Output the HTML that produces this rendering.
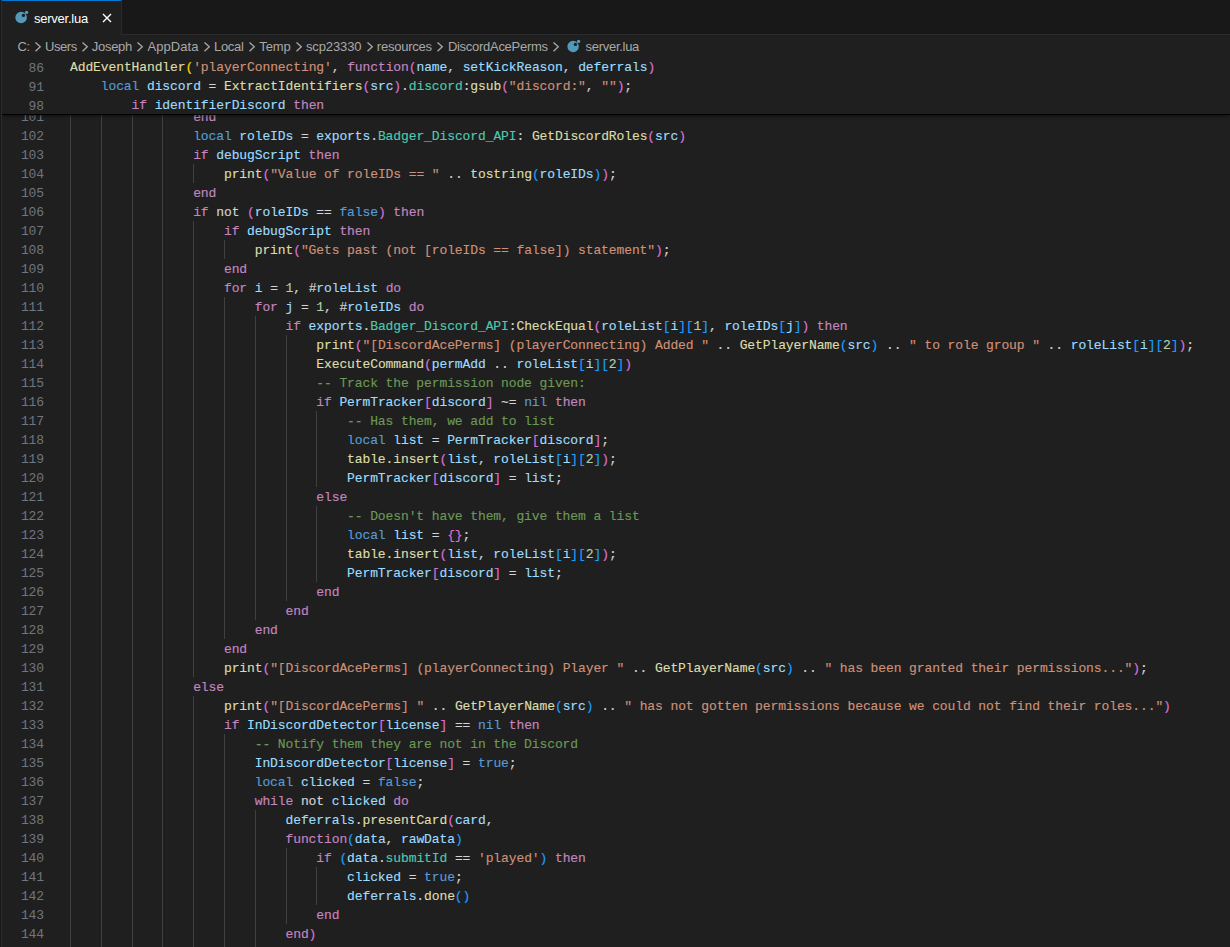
<!DOCTYPE html>
<html lang="en">
<head>
<meta charset="utf-8">
<title>server.lua</title>
<style>
html,body{margin:0;padding:0;background:#1f1f1f;}
body{width:1230px;height:947px;overflow:hidden;position:relative;font-family:"Liberation Sans",sans-serif;}
#edge{position:absolute;left:0;top:0;width:1px;height:947px;background:#181818;border-right:1px solid #2b2b2b;z-index:9}
#tabs{position:absolute;left:2px;top:0;width:1228px;height:34px;background:#181818;border-bottom:1px solid #2b2b2b}
#tab{position:absolute;left:0;top:0;width:119px;height:34px;background:#1f1f1f;border-top:1px solid #0078d4;border-right:1px solid #2b2b2b;box-sizing:content-box}
#tab .lbl{position:absolute;left:32px;top:9px;font-size:13px;line-height:17px;color:#fff;white-space:pre;letter-spacing:-0.24px}
#tab svg{position:absolute}
#bc{position:absolute;left:2px;top:35px;width:1228px;height:22px;background:#1f1f1f;color:#a9a9a9;font-size:13px;line-height:22px}
#bc span{position:absolute;top:1px;white-space:pre}
#bc svg{position:absolute;top:0.5px}
#ed{position:absolute;left:2px;top:57px;width:1228px;height:890px;overflow:hidden;background:#1f1f1f}
#sticky{position:absolute;left:0;top:0;width:1228px;height:57px;background:#1f1f1f;z-index:5;box-shadow:0 1px 0 #000,0 3px 3px -1px rgba(0,0,0,.55)}
.l{position:absolute;left:-2px;width:1230px;height:19px;font-family:"Liberation Mono",monospace;font-size:13px;line-height:19px;letter-spacing:-0.104px;white-space:pre;color:#d4d4d4}
.l .ln{position:absolute;left:0;top:2px;width:44px;text-align:right;color:#6e7681}
.l .code{position:absolute;top:2px;-webkit-text-stroke:0.15px}
#sticky .code{top:1px}#sticky .ln{top:1.5px}
.l i{position:absolute;top:1px;width:1px;height:19px;background:#404040}
.k{color:#c586c0}.b{color:#569cd6}.w{color:#d4d4d4}.s{color:#ce9178}.c{color:#6a9955}.n{color:#b5cea8}
.f{color:#dcdcaa}.t{color:#4ec9b0}.v{color:#9cdcfe}
.B0{color:#ffd700}.B1{color:#da70d6}.B2{color:#179fff}
</style>
</head>
<body>
<div id="edge"></div>
<div id="tabs">
  <div id="tab">
    <svg style="left:12px;top:9px" width="16" height="16" viewBox="0 0 16 16"><path fill="#519aba" fill-rule="evenodd" d="M7.1 1.7a5.8 5.8 0 1 0 0 11.6a5.8 5.8 0 1 0 0-11.6zM9.4 3.7a1.7 1.7 0 1 1 0 3.4a1.7 1.7 0 1 1 0-3.4z"/><circle cx="12.6" cy="2.4" r="1.7" fill="#519aba"/></svg>
    <span class="lbl">server.lua</span>
    <svg style="left:96.9px;top:9px" width="16" height="16" viewBox="0 0 16 16"><path d="M4 4l8 8M12 4l-8 8" stroke="#ffffff" stroke-width="1.35" fill="none"/></svg>
  </div>
</div>
<div id="bc">
<span style="left:15.5px;letter-spacing:-0.50px">C:</span><svg style="left:27.8px" width="16" height="22" viewBox="0 0 16 22"><path d="M5.5 6.4l4.8 4.4l-4.8 4.4" stroke="#a9a9a9" stroke-width="1.3" fill="none"/></svg>
<span style="left:43.1px;letter-spacing:-0.47px">Users</span><svg style="left:75.0px" width="16" height="22" viewBox="0 0 16 22"><path d="M5.5 6.4l4.8 4.4l-4.8 4.4" stroke="#a9a9a9" stroke-width="1.3" fill="none"/></svg>
<span style="left:89.8px;letter-spacing:-0.29px">Joseph</span><svg style="left:130.3px" width="16" height="22" viewBox="0 0 16 22"><path d="M5.5 6.4l4.8 4.4l-4.8 4.4" stroke="#a9a9a9" stroke-width="1.3" fill="none"/></svg>
<span style="left:145.5px;letter-spacing:0.06px">AppData</span><svg style="left:196.8px" width="16" height="22" viewBox="0 0 16 22"><path d="M5.5 6.4l4.8 4.4l-4.8 4.4" stroke="#a9a9a9" stroke-width="1.3" fill="none"/></svg>
<span style="left:212.1px;letter-spacing:-0.34px">Local</span><svg style="left:241.8px" width="16" height="22" viewBox="0 0 16 22"><path d="M5.5 6.4l4.8 4.4l-4.8 4.4" stroke="#a9a9a9" stroke-width="1.3" fill="none"/></svg>
<span style="left:257.2px;letter-spacing:-0.05px">Temp</span><svg style="left:289.1px" width="16" height="22" viewBox="0 0 16 22"><path d="M5.5 6.4l4.8 4.4l-4.8 4.4" stroke="#a9a9a9" stroke-width="1.3" fill="none"/></svg>
<span style="left:303.9px;letter-spacing:-0.11px">scp23330</span><svg style="left:359.7px" width="16" height="22" viewBox="0 0 16 22"><path d="M5.5 6.4l4.8 4.4l-4.8 4.4" stroke="#a9a9a9" stroke-width="1.3" fill="none"/></svg>
<span style="left:374.8px;letter-spacing:-0.22px">resources</span><svg style="left:430.2px" width="16" height="22" viewBox="0 0 16 22"><path d="M5.5 6.4l4.8 4.4l-4.8 4.4" stroke="#a9a9a9" stroke-width="1.3" fill="none"/></svg>
<span style="left:445.9px;letter-spacing:-0.28px">DiscordAcePerms</span><svg style="left:546.1px" width="16" height="22" viewBox="0 0 16 22"><path d="M5.5 6.4l4.8 4.4l-4.8 4.4" stroke="#a9a9a9" stroke-width="1.3" fill="none"/></svg>
<span style="left:583.5px;letter-spacing:-0.28px">server.lua</span>
<svg style="left:563.6px;top:4.1px" width="16" height="16" viewBox="0 0 16 16"><path fill="#519aba" fill-rule="evenodd" d="M7.1 1.8a5.7 5.7 0 1 0 0 11.4a5.7 5.7 0 1 0 0-11.4zM9.4 3.7a1.7 1.7 0 1 1 0 3.4a1.7 1.7 0 1 1 0-3.4z"/><circle cx="12.6" cy="2.4" r="1.7" fill="#519aba"/></svg>

</div>
<div id="ed">
<div id="sticky">
<div class="l" style="top:0px"><span class="ln">86</span><span class="code" style="left:70px"><span class="f">AddEventHandler</span><span class="B0">(</span><span class="s">'playerConnecting'</span><span class="w">, </span><span class="k">function</span><span class="B1">(</span><span class="v">name</span><span class="w">, </span><span class="v">setKickReason</span><span class="w">, </span><span class="v">deferrals</span><span class="B1">)</span></span></div>
<div class="l" style="top:19px"><span class="ln">91</span><span class="code" style="left:100.79px"><span class="b">local </span><span class="v">discord </span><span class="w">= </span><span class="f">ExtractIdentifiers</span><span class="B1">(</span><span class="v">src</span><span class="B1">)</span><span class="w">.</span><span class="t">discord</span><span class="w">:</span><span class="f">gsub</span><span class="B1">(</span><span class="s">"discord:"</span><span class="w">, </span><span class="s">""</span><span class="B1">)</span><span class="w">;</span></span></div>
<div class="l" style="top:38px"><span class="ln">98</span><span class="code" style="left:131.58px"><span class="k">if </span><span class="v">identifierDiscord </span><span class="k">then</span></span></div>

</div>
<div class="l" style="top:49px"><span class="ln">101</span><i style="left:70px"></i><i style="left:101px"></i><i style="left:132px"></i><i style="left:162px"></i><span class="code" style="left:193.15px"><span class="k">end</span></span></div>
<div class="l" style="top:68px"><span class="ln">102</span><i style="left:70px"></i><i style="left:101px"></i><i style="left:132px"></i><i style="left:162px"></i><span class="code" style="left:193.15px"><span class="b">local </span><span class="v">roleIDs </span><span class="w">= </span><span class="v">exports</span><span class="w">.</span><span class="t">Badger_Discord_API</span><span class="w">: </span><span class="f">GetDiscordRoles</span><span class="B1">(</span><span class="v">src</span><span class="B1">)</span></span></div>
<div class="l" style="top:87px"><span class="ln">103</span><i style="left:70px"></i><i style="left:101px"></i><i style="left:132px"></i><i style="left:162px"></i><span class="code" style="left:193.15px"><span class="k">if </span><span class="v">debugScript </span><span class="k">then</span></span></div>
<div class="l" style="top:106px"><span class="ln">104</span><i style="left:70px"></i><i style="left:101px"></i><i style="left:132px"></i><i style="left:162px"></i><i style="left:193px"></i><span class="code" style="left:223.94px"><span class="f">print</span><span class="B1">(</span><span class="s">"Value of roleIDs == " </span><span class="w">.. </span><span class="f">tostring</span><span class="B2">(</span><span class="v">roleIDs</span><span class="B2">)</span><span class="B1">)</span><span class="w">;</span></span></div>
<div class="l" style="top:125px"><span class="ln">105</span><i style="left:70px"></i><i style="left:101px"></i><i style="left:132px"></i><i style="left:162px"></i><span class="code" style="left:193.15px"><span class="k">end</span></span></div>
<div class="l" style="top:144px"><span class="ln">106</span><i style="left:70px"></i><i style="left:101px"></i><i style="left:132px"></i><i style="left:162px"></i><span class="code" style="left:193.15px"><span class="k">if </span><span class="w">not </span><span class="B1">(</span><span class="v">roleIDs </span><span class="w">== </span><span class="b">false</span><span class="B1">) </span><span class="k">then</span></span></div>
<div class="l" style="top:163px"><span class="ln">107</span><i style="left:70px"></i><i style="left:101px"></i><i style="left:132px"></i><i style="left:162px"></i><i style="left:193px"></i><span class="code" style="left:223.94px"><span class="k">if </span><span class="v">debugScript </span><span class="k">then</span></span></div>
<div class="l" style="top:182px"><span class="ln">108</span><i style="left:70px"></i><i style="left:101px"></i><i style="left:132px"></i><i style="left:162px"></i><i style="left:193px"></i><i style="left:224px"></i><span class="code" style="left:254.73px"><span class="f">print</span><span class="B1">(</span><span class="s">"Gets past (not [roleIDs == false]) statement"</span><span class="B1">)</span><span class="w">;</span></span></div>
<div class="l" style="top:201px"><span class="ln">109</span><i style="left:70px"></i><i style="left:101px"></i><i style="left:132px"></i><i style="left:162px"></i><i style="left:193px"></i><span class="code" style="left:223.94px"><span class="k">end</span></span></div>
<div class="l" style="top:220px"><span class="ln">110</span><i style="left:70px"></i><i style="left:101px"></i><i style="left:132px"></i><i style="left:162px"></i><i style="left:193px"></i><span class="code" style="left:223.94px"><span class="k">for </span><span class="v">i </span><span class="w">= </span><span class="n">1</span><span class="w">, #</span><span class="v">roleList </span><span class="k">do</span></span></div>
<div class="l" style="top:239px"><span class="ln">111</span><i style="left:70px"></i><i style="left:101px"></i><i style="left:132px"></i><i style="left:162px"></i><i style="left:193px"></i><i style="left:224px"></i><span class="code" style="left:254.73px"><span class="k">for </span><span class="v">j </span><span class="w">= </span><span class="n">1</span><span class="w">, #</span><span class="v">roleIDs </span><span class="k">do</span></span></div>
<div class="l" style="top:258px"><span class="ln">112</span><i style="left:70px"></i><i style="left:101px"></i><i style="left:132px"></i><i style="left:162px"></i><i style="left:193px"></i><i style="left:224px"></i><i style="left:255px"></i><span class="code" style="left:285.52px"><span class="k">if </span><span class="v">exports</span><span class="w">.</span><span class="t">Badger_Discord_API</span><span class="w">:</span><span class="f">CheckEqual</span><span class="B1">(</span><span class="v">roleList</span><span class="B2">[</span><span class="v">i</span><span class="B2">][</span><span class="n">1</span><span class="B2">]</span><span class="w">, </span><span class="v">roleIDs</span><span class="B2">[</span><span class="v">j</span><span class="B2">]</span><span class="B1">) </span><span class="k">then</span></span></div>
<div class="l" style="top:277px"><span class="ln">113</span><i style="left:70px"></i><i style="left:101px"></i><i style="left:132px"></i><i style="left:162px"></i><i style="left:193px"></i><i style="left:224px"></i><i style="left:255px"></i><i style="left:286px"></i><span class="code" style="left:316.3px"><span class="f">print</span><span class="B1">(</span><span class="s">"[DiscordAcePerms] (playerConnecting) Added " </span><span class="w">.. </span><span class="f">GetPlayerName</span><span class="B2">(</span><span class="v">src</span><span class="B2">) </span><span class="w">.. </span><span class="s">" to role group " </span><span class="w">.. </span><span class="v">roleList</span><span class="B2">[</span><span class="v">i</span><span class="B2">][</span><span class="n">2</span><span class="B2">]</span><span class="B1">)</span><span class="w">;</span></span></div>
<div class="l" style="top:296px"><span class="ln">114</span><i style="left:70px"></i><i style="left:101px"></i><i style="left:132px"></i><i style="left:162px"></i><i style="left:193px"></i><i style="left:224px"></i><i style="left:255px"></i><i style="left:286px"></i><span class="code" style="left:316.3px"><span class="f">ExecuteCommand</span><span class="B1">(</span><span class="v">permAdd </span><span class="w">.. </span><span class="v">roleList</span><span class="B2">[</span><span class="v">i</span><span class="B2">][</span><span class="n">2</span><span class="B2">]</span><span class="B1">)</span></span></div>
<div class="l" style="top:315px"><span class="ln">115</span><i style="left:70px"></i><i style="left:101px"></i><i style="left:132px"></i><i style="left:162px"></i><i style="left:193px"></i><i style="left:224px"></i><i style="left:255px"></i><i style="left:286px"></i><span class="code" style="left:316.3px"><span class="c">-- Track the permission node given:</span></span></div>
<div class="l" style="top:334px"><span class="ln">116</span><i style="left:70px"></i><i style="left:101px"></i><i style="left:132px"></i><i style="left:162px"></i><i style="left:193px"></i><i style="left:224px"></i><i style="left:255px"></i><i style="left:286px"></i><span class="code" style="left:316.3px"><span class="k">if </span><span class="v">PermTracker</span><span class="B1">[</span><span class="v">discord</span><span class="B1">] </span><span class="w">~= </span><span class="b">nil </span><span class="k">then</span></span></div>
<div class="l" style="top:353px"><span class="ln">117</span><i style="left:70px"></i><i style="left:101px"></i><i style="left:132px"></i><i style="left:162px"></i><i style="left:193px"></i><i style="left:224px"></i><i style="left:255px"></i><i style="left:286px"></i><i style="left:316px"></i><span class="code" style="left:347.09px"><span class="c">-- Has them, we add to list</span></span></div>
<div class="l" style="top:372px"><span class="ln">118</span><i style="left:70px"></i><i style="left:101px"></i><i style="left:132px"></i><i style="left:162px"></i><i style="left:193px"></i><i style="left:224px"></i><i style="left:255px"></i><i style="left:286px"></i><i style="left:316px"></i><span class="code" style="left:347.09px"><span class="b">local </span><span class="v">list </span><span class="w">= </span><span class="v">PermTracker</span><span class="B1">[</span><span class="v">discord</span><span class="B1">]</span><span class="w">;</span></span></div>
<div class="l" style="top:391px"><span class="ln">119</span><i style="left:70px"></i><i style="left:101px"></i><i style="left:132px"></i><i style="left:162px"></i><i style="left:193px"></i><i style="left:224px"></i><i style="left:255px"></i><i style="left:286px"></i><i style="left:316px"></i><span class="code" style="left:347.09px"><span class="f">table.insert</span><span class="B1">(</span><span class="v">list</span><span class="w">, </span><span class="v">roleList</span><span class="B2">[</span><span class="v">i</span><span class="B2">][</span><span class="n">2</span><span class="B2">]</span><span class="B1">)</span><span class="w">;</span></span></div>
<div class="l" style="top:410px"><span class="ln">120</span><i style="left:70px"></i><i style="left:101px"></i><i style="left:132px"></i><i style="left:162px"></i><i style="left:193px"></i><i style="left:224px"></i><i style="left:255px"></i><i style="left:286px"></i><i style="left:316px"></i><span class="code" style="left:347.09px"><span class="v">PermTracker</span><span class="B1">[</span><span class="v">discord</span><span class="B1">] </span><span class="w">= </span><span class="v">list</span><span class="w">;</span></span></div>
<div class="l" style="top:429px"><span class="ln">121</span><i style="left:70px"></i><i style="left:101px"></i><i style="left:132px"></i><i style="left:162px"></i><i style="left:193px"></i><i style="left:224px"></i><i style="left:255px"></i><i style="left:286px"></i><span class="code" style="left:316.3px"><span class="k">else</span></span></div>
<div class="l" style="top:448px"><span class="ln">122</span><i style="left:70px"></i><i style="left:101px"></i><i style="left:132px"></i><i style="left:162px"></i><i style="left:193px"></i><i style="left:224px"></i><i style="left:255px"></i><i style="left:286px"></i><i style="left:316px"></i><span class="code" style="left:347.09px"><span class="c">-- Doesn't have them, give them a list</span></span></div>
<div class="l" style="top:467px"><span class="ln">123</span><i style="left:70px"></i><i style="left:101px"></i><i style="left:132px"></i><i style="left:162px"></i><i style="left:193px"></i><i style="left:224px"></i><i style="left:255px"></i><i style="left:286px"></i><i style="left:316px"></i><span class="code" style="left:347.09px"><span class="b">local </span><span class="v">list </span><span class="w">= </span><span class="B1">{}</span><span class="w">;</span></span></div>
<div class="l" style="top:486px"><span class="ln">124</span><i style="left:70px"></i><i style="left:101px"></i><i style="left:132px"></i><i style="left:162px"></i><i style="left:193px"></i><i style="left:224px"></i><i style="left:255px"></i><i style="left:286px"></i><i style="left:316px"></i><span class="code" style="left:347.09px"><span class="f">table.insert</span><span class="B1">(</span><span class="v">list</span><span class="w">, </span><span class="v">roleList</span><span class="B2">[</span><span class="v">i</span><span class="B2">][</span><span class="n">2</span><span class="B2">]</span><span class="B1">)</span><span class="w">;</span></span></div>
<div class="l" style="top:505px"><span class="ln">125</span><i style="left:70px"></i><i style="left:101px"></i><i style="left:132px"></i><i style="left:162px"></i><i style="left:193px"></i><i style="left:224px"></i><i style="left:255px"></i><i style="left:286px"></i><i style="left:316px"></i><span class="code" style="left:347.09px"><span class="v">PermTracker</span><span class="B1">[</span><span class="v">discord</span><span class="B1">] </span><span class="w">= </span><span class="v">list</span><span class="w">;</span></span></div>
<div class="l" style="top:524px"><span class="ln">126</span><i style="left:70px"></i><i style="left:101px"></i><i style="left:132px"></i><i style="left:162px"></i><i style="left:193px"></i><i style="left:224px"></i><i style="left:255px"></i><i style="left:286px"></i><span class="code" style="left:316.3px"><span class="k">end</span></span></div>
<div class="l" style="top:543px"><span class="ln">127</span><i style="left:70px"></i><i style="left:101px"></i><i style="left:132px"></i><i style="left:162px"></i><i style="left:193px"></i><i style="left:224px"></i><i style="left:255px"></i><span class="code" style="left:285.52px"><span class="k">end</span></span></div>
<div class="l" style="top:562px"><span class="ln">128</span><i style="left:70px"></i><i style="left:101px"></i><i style="left:132px"></i><i style="left:162px"></i><i style="left:193px"></i><i style="left:224px"></i><span class="code" style="left:254.73px"><span class="k">end</span></span></div>
<div class="l" style="top:581px"><span class="ln">129</span><i style="left:70px"></i><i style="left:101px"></i><i style="left:132px"></i><i style="left:162px"></i><i style="left:193px"></i><span class="code" style="left:223.94px"><span class="k">end</span></span></div>
<div class="l" style="top:600px"><span class="ln">130</span><i style="left:70px"></i><i style="left:101px"></i><i style="left:132px"></i><i style="left:162px"></i><i style="left:193px"></i><span class="code" style="left:223.94px"><span class="f">print</span><span class="B1">(</span><span class="s">"[DiscordAcePerms] (playerConnecting) Player " </span><span class="w">.. </span><span class="f">GetPlayerName</span><span class="B2">(</span><span class="v">src</span><span class="B2">) </span><span class="w">.. </span><span class="s">" has been granted their permissions..."</span><span class="B1">)</span><span class="w">;</span></span></div>
<div class="l" style="top:619px"><span class="ln">131</span><i style="left:70px"></i><i style="left:101px"></i><i style="left:132px"></i><i style="left:162px"></i><span class="code" style="left:193.15px"><span class="k">else</span></span></div>
<div class="l" style="top:638px"><span class="ln">132</span><i style="left:70px"></i><i style="left:101px"></i><i style="left:132px"></i><i style="left:162px"></i><i style="left:193px"></i><span class="code" style="left:223.94px"><span class="f">print</span><span class="B1">(</span><span class="s">"[DiscordAcePerms] " </span><span class="w">.. </span><span class="f">GetPlayerName</span><span class="B2">(</span><span class="v">src</span><span class="B2">) </span><span class="w">.. </span><span class="s">" has not gotten permissions because we could not find their roles..."</span><span class="B1">)</span></span></div>
<div class="l" style="top:657px"><span class="ln">133</span><i style="left:70px"></i><i style="left:101px"></i><i style="left:132px"></i><i style="left:162px"></i><i style="left:193px"></i><span class="code" style="left:223.94px"><span class="k">if </span><span class="v">InDiscordDetector</span><span class="B1">[</span><span class="v">license</span><span class="B1">] </span><span class="w">== </span><span class="b">nil </span><span class="k">then</span></span></div>
<div class="l" style="top:676px"><span class="ln">134</span><i style="left:70px"></i><i style="left:101px"></i><i style="left:132px"></i><i style="left:162px"></i><i style="left:193px"></i><i style="left:224px"></i><span class="code" style="left:254.73px"><span class="c">-- Notify them they are not in the Discord</span></span></div>
<div class="l" style="top:695px"><span class="ln">135</span><i style="left:70px"></i><i style="left:101px"></i><i style="left:132px"></i><i style="left:162px"></i><i style="left:193px"></i><i style="left:224px"></i><span class="code" style="left:254.73px"><span class="v">InDiscordDetector</span><span class="B1">[</span><span class="v">license</span><span class="B1">] </span><span class="w">= </span><span class="b">true</span><span class="w">;</span></span></div>
<div class="l" style="top:714px"><span class="ln">136</span><i style="left:70px"></i><i style="left:101px"></i><i style="left:132px"></i><i style="left:162px"></i><i style="left:193px"></i><i style="left:224px"></i><span class="code" style="left:254.73px"><span class="b">local </span><span class="v">clicked </span><span class="w">= </span><span class="b">false</span><span class="w">;</span></span></div>
<div class="l" style="top:733px"><span class="ln">137</span><i style="left:70px"></i><i style="left:101px"></i><i style="left:132px"></i><i style="left:162px"></i><i style="left:193px"></i><i style="left:224px"></i><span class="code" style="left:254.73px"><span class="k">while </span><span class="w">not </span><span class="v">clicked </span><span class="k">do</span></span></div>
<div class="l" style="top:752px"><span class="ln">138</span><i style="left:70px"></i><i style="left:101px"></i><i style="left:132px"></i><i style="left:162px"></i><i style="left:193px"></i><i style="left:224px"></i><i style="left:255px"></i><span class="code" style="left:285.52px"><span class="v">deferrals</span><span class="w">.</span><span class="f">presentCard</span><span class="B1">(</span><span class="v">card</span><span class="w">,</span></span></div>
<div class="l" style="top:771px"><span class="ln">139</span><i style="left:70px"></i><i style="left:101px"></i><i style="left:132px"></i><i style="left:162px"></i><i style="left:193px"></i><i style="left:224px"></i><i style="left:255px"></i><span class="code" style="left:285.52px"><span class="k">function</span><span class="B2">(</span><span class="v">data</span><span class="w">, </span><span class="v">rawData</span><span class="B2">)</span></span></div>
<div class="l" style="top:790px"><span class="ln">140</span><i style="left:70px"></i><i style="left:101px"></i><i style="left:132px"></i><i style="left:162px"></i><i style="left:193px"></i><i style="left:224px"></i><i style="left:255px"></i><i style="left:286px"></i><span class="code" style="left:316.3px"><span class="k">if </span><span class="B2">(</span><span class="v">data</span><span class="w">.</span><span class="t">submitId </span><span class="w">== </span><span class="s">'played'</span><span class="B2">) </span><span class="k">then</span></span></div>
<div class="l" style="top:809px"><span class="ln">141</span><i style="left:70px"></i><i style="left:101px"></i><i style="left:132px"></i><i style="left:162px"></i><i style="left:193px"></i><i style="left:224px"></i><i style="left:255px"></i><i style="left:286px"></i><i style="left:316px"></i><span class="code" style="left:347.09px"><span class="v">clicked </span><span class="w">= </span><span class="b">true</span><span class="w">;</span></span></div>
<div class="l" style="top:828px"><span class="ln">142</span><i style="left:70px"></i><i style="left:101px"></i><i style="left:132px"></i><i style="left:162px"></i><i style="left:193px"></i><i style="left:224px"></i><i style="left:255px"></i><i style="left:286px"></i><i style="left:316px"></i><span class="code" style="left:347.09px"><span class="v">deferrals</span><span class="w">.</span><span class="f">done</span><span class="B2">()</span></span></div>
<div class="l" style="top:847px"><span class="ln">143</span><i style="left:70px"></i><i style="left:101px"></i><i style="left:132px"></i><i style="left:162px"></i><i style="left:193px"></i><i style="left:224px"></i><i style="left:255px"></i><i style="left:286px"></i><span class="code" style="left:316.3px"><span class="k">end</span></span></div>
<div class="l" style="top:866px"><span class="ln">144</span><i style="left:70px"></i><i style="left:101px"></i><i style="left:132px"></i><i style="left:162px"></i><i style="left:193px"></i><i style="left:224px"></i><i style="left:255px"></i><span class="code" style="left:285.52px"><span class="k">end</span><span class="B1">)</span></span></div>
<div class="l" style="top:885px"><span class="ln">145</span><i style="left:70px"></i><i style="left:101px"></i><i style="left:132px"></i><i style="left:162px"></i><i style="left:193px"></i><i style="left:224px"></i><i style="left:255px"></i><span class="code" style="left:285.52px"></span></div>

</div>
</body>
</html>
